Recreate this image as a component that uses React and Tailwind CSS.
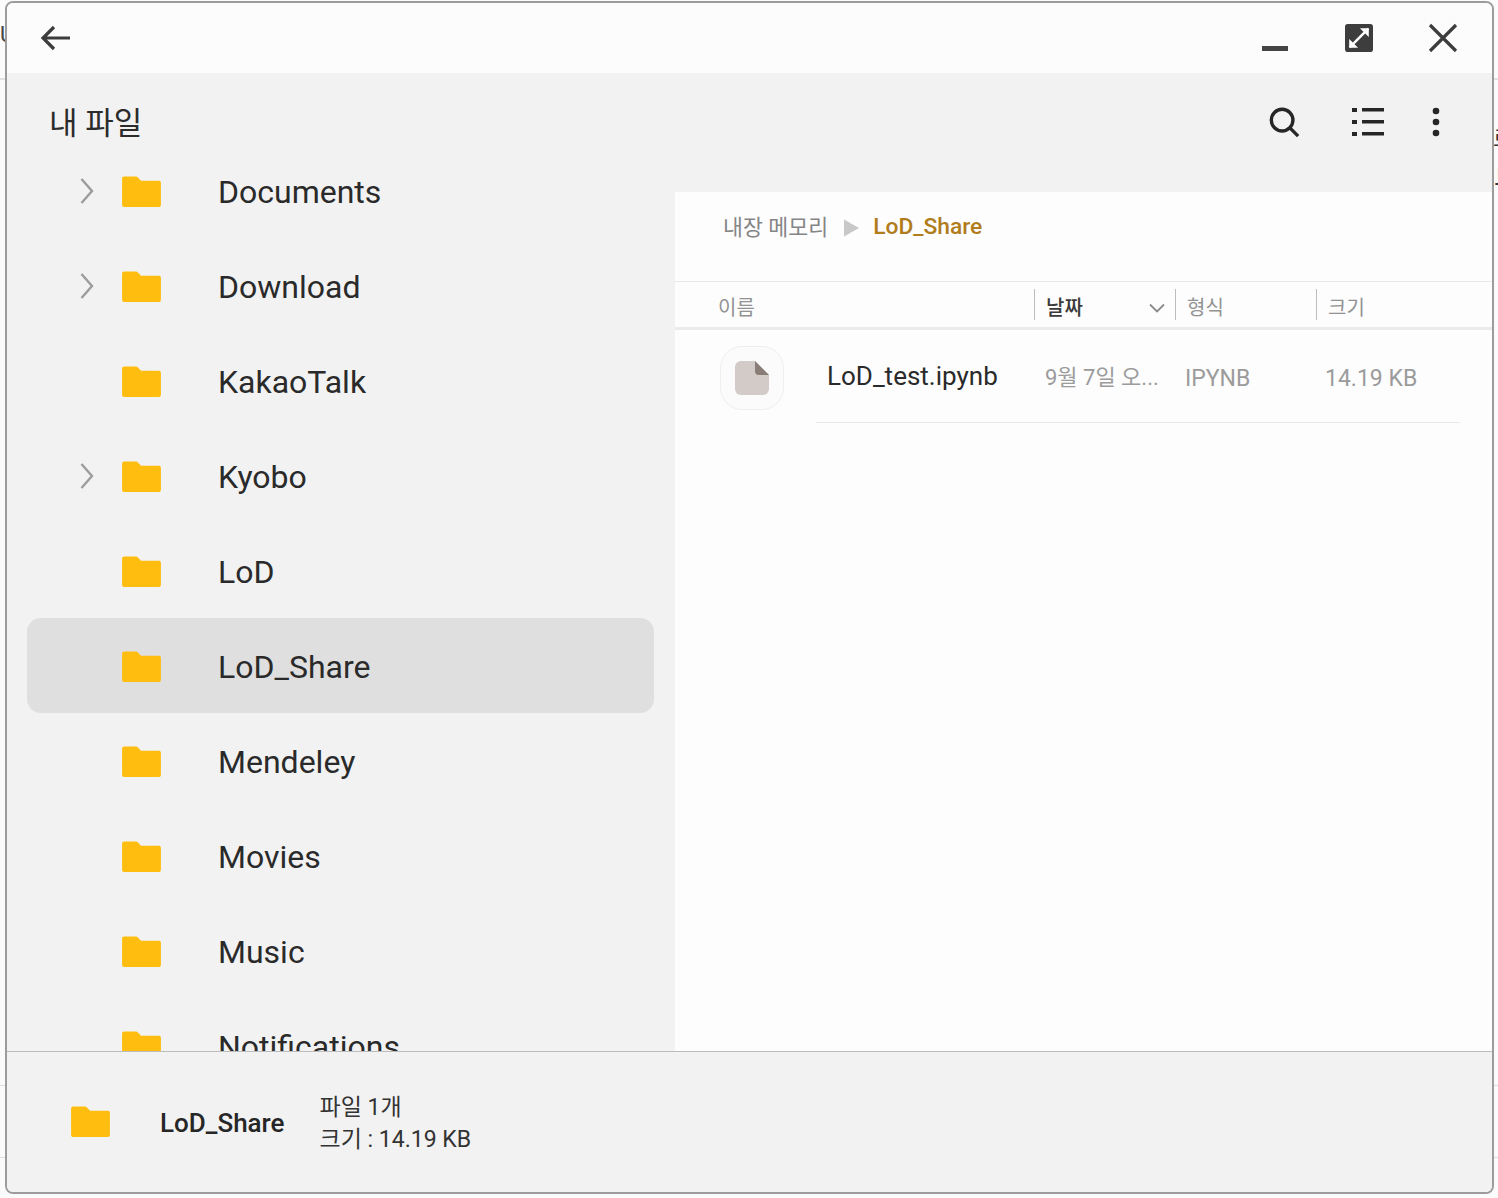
const FONT = "font-['Roboto','Noto_Sans_CJK_KR',sans-serif]";

function Folder({ className = "" }) {
  return (
    <svg width="39" height="33" viewBox="0 0 40 34" className={className}>
      <path d="M2 1.5h11.5c1.4 0 2.4.5 3.3 1.5l2.7 3h18.5a2 2 0 0 1 2 2v23a2 2 0 0 1-2 2H2a2 2 0 0 1-2-2V3.5a2 2 0 0 1 2-2z" fill="#ffbd10" />
    </svg>
  );
}

function Chevron() {
  return (
    <svg width="14" height="28" viewBox="0 0 14 28">
      <path d="M1.5 2 L12 14 L1.5 26" fill="none" stroke="#9c9c9c" strokeWidth="2.4" />
    </svg>
  );
}

const rows = [
  ["Documents", true],
  ["Download", true],
  ["KakaoTalk", false],
  ["Kyobo", true],
  ["LoD", false],
  ["LoD_Share", false, true],
  ["Mendeley", false],
  ["Movies", false],
  ["Music", false],
  ["Notifications", false],
];

function Row({ name, chevron, selected }) {
  return (
    <div className={`flex h-[95px] shrink-0 items-center ml-5 mr-[21px] rounded-[14px] ${selected ? "bg-[#dfdfdf]" : ""}`}>
      <div className="w-[34px] shrink-0 ml-[53px] flex">{chevron && <Chevron />}</div>
      <Folder className="shrink-0 mt-[1px] ml-[8px]" />
      <span className="ml-[57px] text-[32px] leading-none text-[#2a2a2a] mt-[3px]">{name}</span>
    </div>
  );
}

export default function App() {
  return (
    <div className={`${FONT} relative w-[1498px] h-[1198px] overflow-hidden bg-[#fbfbfb]`}>
      <div className="absolute left-0 right-0 top-[78px] h-[2px] bg-[#e2e2e2]" />
      <div className="absolute left-0 right-0 top-[1085px] h-[1px] bg-[#dddddd]" />
      <div className="absolute left-0 right-0 top-[1157px] h-[1px] bg-[#dddddd]" />
      <div className="absolute left-[1493px] top-[128px] text-[22px] leading-none text-[#333333]">로</div>
      <div className="absolute left-[1494px] top-[168px] text-[28px] leading-none text-[#333333]">부</div>
      <div className="absolute left-0 top-[24px] text-[22px] leading-none text-[#444444]">U</div>

      <div className="absolute left-[5px] top-px w-[1489px] h-[1193px] flex flex-col overflow-hidden rounded-[8px] border-2 border-[#9c9c9c] bg-[#f2f2f2]">
        {/* Title bar */}
        <div className="h-[70px] shrink-0 bg-[#fcfcfc] flex items-center relative">
          <svg width="32" height="26" viewBox="0 0 32 26" className="ml-[33px]">
            <path d="M30 13H3M14 2 3 13l11 11" fill="none" stroke="#3c3c3c" strokeWidth="3.2" />
          </svg>
          <div className="ml-auto flex items-center">
            <div className="w-[26px] h-[5px] bg-[#444444] mt-[21px] mr-[57px]" />
            <svg width="28" height="28" viewBox="0 0 30 30" className="mr-[55px]">
              <rect width="30" height="30" rx="3" fill="#3d3d3d" />
              <path d="M5 25 25 5" stroke="#fff" strokeWidth="2.6" />
              <path d="M16 4.500h9.500V14zM4.500 16V25.500H14z" fill="#fff" />
            </svg>
            <svg width="30" height="30" viewBox="0 0 30 30" className="mr-[34px]">
              <path d="M2 2 28 28M28 2 2 28" stroke="#3c3c3c" strokeWidth="3.2" />
            </svg>
          </div>
        </div>

        <div className="flex-1 flex min-h-0">
          {/* Left tree */}
          <div className="w-[668px] shrink-0 flex flex-col min-h-0">
            <div className="h-[70px] shrink-0 flex items-center pl-[42px]">
              <span className="text-[31px] leading-none text-[#2b2b2b] mt-[31px]">내 파일</span>
            </div>
            <div className="flex-1 min-h-0 overflow-hidden flex flex-col">
              {rows.map(([n, c, s]) => (
                <Row key={n} name={n} chevron={c} selected={s} />
              ))}
            </div>
          </div>

          {/* Right */}
          <div className="flex-1 flex flex-col min-h-0">
            <div className="h-[119px] shrink-0 relative">
              <div className="flex items-center h-[98px] justify-end pr-[51px]">
                <svg width="32" height="32" viewBox="0 0 34 34" className="mr-[52px]">
                  <circle cx="15" cy="15" r="11.500" fill="none" stroke="#262626" strokeWidth="3.6" />
                  <path d="M23 23 32 32" stroke="#262626" strokeWidth="3.6" />
                </svg>
                <svg width="32" height="30" viewBox="0 0 32 30" className="mr-[47px]">
                  <path d="M0 1h5v4H0zM0 13h5v4H0zM0 25h5v4H0z" fill="#262626" />
                  <path d="M10 1h22v3.500H10zM10 13h22v3.500H10zM10 25h22v3.500H10z" fill="#262626" />
                </svg>
                <svg width="10" height="30" viewBox="0 0 10 30">
                  <circle cx="5" cy="4" r="3.300" fill="#262626" />
                  <circle cx="5" cy="15" r="3.300" fill="#262626" />
                  <circle cx="5" cy="26" r="3.300" fill="#262626" />
                </svg>
              </div>
            </div>

            <div className="flex-1 bg-[#fdfdfd] flex flex-col min-h-0">
              <div className="h-[90px] shrink-0 border-b border-[#e8e8e8] flex items-center pl-[48px] pb-[18px]">
                <span className="text-[21.7px] leading-none text-[#858585]">내장 메모리</span>
                <svg width="15" height="18" viewBox="0 0 16 18" className="ml-[16px] mr-[14px]">
                  <path d="M0 0 16 9 0 18z" fill="#c8c8c8" />
                </svg>
                <span className="text-[22.8px] leading-none font-medium text-[#b07c1c]">LoD_Share</span>
              </div>

              <div className="h-[48px] shrink-0 border-b-[3px] border-[#ebebeb] flex items-stretch text-[20px] text-[#929292]">
                <div className="w-[359px] pl-[43px] pt-[7px] flex items-center">이름</div>
                <div className="w-[141px] flex items-center border-l border-[#bdbdbd] my-[7px] pl-[11px] pt-[7px] font-medium text-[#3a3a3a]">
                  날짜
                  <svg width="16" height="10" viewBox="0 0 16 10" className="ml-auto mr-[10px]">
                    <path d="M1 1.500 8 8.500 15 1.500" fill="none" stroke="#8a8a8a" strokeWidth="1.800" />
                  </svg>
                </div>
                <div className="w-[141px] flex items-center border-l border-[#bdbdbd] my-[7px] pl-[11px] pt-[7px]">형식</div>
                <div className="flex-1 flex items-center border-l border-[#bdbdbd] my-[7px] pl-[11px] pt-[7px]">크기</div>
              </div>

              <div className="flex items-start">
                <div className="w-[64px] h-[64px] ml-[45px] mt-[16px] rounded-[22px] border border-[#f0efee] bg-[#fbfbfb] flex items-center justify-center shrink-0">
                  <svg width="34" height="34" viewBox="0 0 34 34">
                    <path d="M6 0h14l14 14v14a6 6 0 0 1-6 6H6a6 6 0 0 1-6-6V6a6 6 0 0 1 6-6z" fill="#d3cbc7" />
                    <path d="M20 0l14 14H24a4 4 0 0 1-4-4z" fill="#8a7d77" />
                  </svg>
                </div>
                <div className="ml-[32px] mr-[32px] flex-1 h-[93px] border-b border-[#e9e9e9] flex items-center">
                  <span className="w-[229px] pl-[11px] text-[26px] leading-none text-[#2a2a2a] shrink-0">LoD_test.ipynb</span>
                  <span className="w-[140px] mt-[4px] text-[22px] leading-none text-[#9b9b9b] shrink-0">9월 7일 오...</span>
                  <span className="w-[140px] mt-[4px] text-[23px] leading-none text-[#9b9b9b] shrink-0">IPYNB</span>
                  <span className="mt-[4px] text-[23px] leading-none text-[#9b9b9b]">14.19 KB</span>
                </div>
              </div>
            </div>
          </div>
        </div>

        {/* Footer */}
        <div className="h-[141px] shrink-0 border-t border-[#bcbcbc] flex items-center bg-[#f2f2f2]">
          <Folder className="ml-[64px] mb-[1px] shrink-0" />
          <span className="ml-[50px] mt-[2px] text-[26px] leading-none font-medium text-[#262626]">LoD_Share</span>
          <div className="ml-[35px] mt-[4px] text-[23px] leading-[32px] text-[#333333]">
            <div>파일 1개</div>
            <div>크기 : 14.19 KB</div>
          </div>
        </div>
      </div>
    </div>
  );
}
